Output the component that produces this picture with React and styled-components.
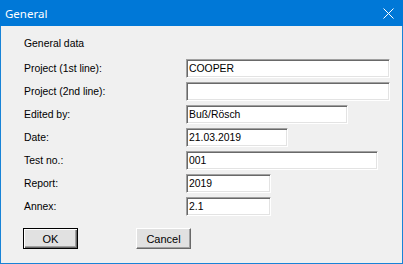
import React from "react";
import styled, { createGlobalStyle } from "styled-components";

const GlobalStyle = createGlobalStyle`
  html, body {
    margin: 0;
    padding: 0;
    background: #f0f0f0;
  }
`;

const Window = styled.div`
  width: 403px;
  height: 264px;
  box-sizing: border-box;
  display: flex;
  flex-direction: column;
  border: 1px solid #1883d7;
  border-top: none;
  background: #f0f0f0;
  font-family: "Liberation Sans", Arial, sans-serif;
  font-size: 10.4px;
  color: #000;
`;

const TitleBar = styled.div`
  height: 26px;
  margin: 0 -1px;
  flex: none;
  display: flex;
  align-items: center;
  justify-content: space-between;
  background: #0078d7;
  color: #fff;
  padding: 0 9px 0 5px;
  font-family: "Noto Sans", "Open Sans", sans-serif;
  font-size: 11.5px;
`;

const Close = styled.svg`
  width: 11px;
  height: 11px;
`;

const Content = styled.div`
  padding: 11px 0 0 23px;
  display: flex;
  flex-direction: column;
`;

const Heading = styled.div`
  height: 13px;
  line-height: 13px;
  margin-bottom: 9px;
`;

const Form = styled.div`
  display: grid;
  grid-template-columns: 162px auto;
  row-gap: 4px;
  align-items: center;
`;

const Label = styled.div`
  line-height: 13px;
`;

const Field = styled.div`
  box-sizing: border-box;
  width: ${(p) => p.$w}px;
  height: 19px;
  background: #fff;
  border-top: 1px solid #a0a0a0;
  border-left: 1px solid #a0a0a0;
  border-bottom: 1px solid #fff;
  border-right: 1px solid #fff;
  box-shadow: inset 1px 1px 0 #696969, inset -1px -1px 0 #e3e3e3;
  padding: 2px 2px 0;
  line-height: 14px;
  white-space: nowrap;
  overflow: hidden;
`;

const Buttons = styled.div`
  display: flex;
  gap: 58px;
  margin: 12px 0 0 -1px;
`;

const Button = styled.button`
  box-sizing: border-box;
  width: 55px;
  height: 21px;
  padding: 0;
  margin: 0;
  background: #e1e1e1;
  font-family: inherit;
  font-size: 11px;
  color: #000;
  border: 1px solid ${(p) => (p.$default ? "#000" : "#fff")};
  ${(p) =>
    p.$default
      ? "box-shadow: inset 1px 1px 0 #fff, inset -1px -1px 0 #696969, inset -2px -2px 0 #a0a0a0;"
      : "border-right-color: #696969; border-bottom-color: #696969; box-shadow: inset -1px -1px 0 #a0a0a0;"}
`;

const fields = [
  ["Project (1st line):", "COOPER", 204],
  ["Project (2nd line):", "", 204],
  ["Edited by:", "Buß/Rösch", 162],
  ["Date:", "21.03.2019", 102],
  ["Test no.:", "001", 192],
  ["Report:", "2019", 85],
  ["Annex:", "2.1", 85],
];

export default function App() {
  return (
    <>
      <GlobalStyle />
      <Window>
        <TitleBar>
          <span>General</span>
          <Close viewBox="0 0 11 11">
            <path d="M0.5 0.5 L10.5 10.5 M10.5 0.5 L0.5 10.5" stroke="#fff" strokeWidth="1" fill="none" />
          </Close>
        </TitleBar>
        <Content>
          <Heading>General data</Heading>
          <Form>
            {fields.map(([label, value, w]) => (
              <React.Fragment key={label}>
                <Label>{label}</Label>
                <Field $w={w}>{value}</Field>
              </React.Fragment>
            ))}
          </Form>
          <Buttons>
            <Button $default>OK</Button>
            <Button>Cancel</Button>
          </Buttons>
        </Content>
      </Window>
    </>
  );
}
